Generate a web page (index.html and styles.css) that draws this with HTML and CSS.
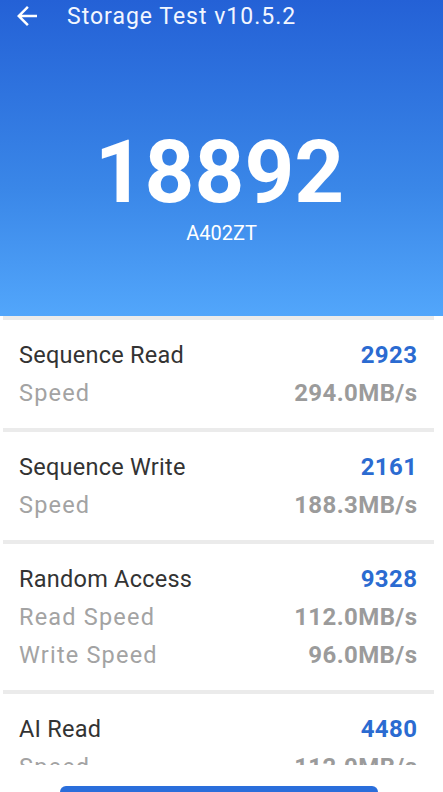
FILE: index.html
```html
<!DOCTYPE html>
<html lang="en">
  <head>
    <meta charset="UTF-8" />
    <meta name="viewport" content="width=device-width, initial-scale=1.0" />
    <title>Storage Test</title>
    <link rel="stylesheet" href="styles.css">
  </head>
  <body>
    <header class="hero">
      <div class="toolbar">
        <svg class="back" viewBox="0 0 24 24" width="30" height="30">
          <path d="M20 11H7.83l5.59-5.59L12 4l-8 8 8 8 1.41-1.41L7.83 13H20v-2z" fill="#fff" />
        </svg>
        <span class="toolbar-title">Storage Test v10.5.2</span>
      </div>
      <div class="score">18892</div>
      <div class="device">A402ZT</div>
    </header>

    <div class="results">
      <div class="card">
        <div class="row">
          <span class="name">Sequence Read</span>
          <span class="points">2923</span>
        </div>
        <div class="row">
          <span class="label">Speed</span>
          <span class="value">294.0MB/s</span>
        </div>
      </div>
      <div class="card">
        <div class="row">
          <span class="name">Sequence Write</span>
          <span class="points">2161</span>
        </div>
        <div class="row">
          <span class="label">Speed</span>
          <span class="value">188.3MB/s</span>
        </div>
      </div>
      <div class="card">
        <div class="row">
          <span class="name">Random Access</span>
          <span class="points">9328</span>
        </div>
        <div class="row">
          <span class="label">Read Speed</span>
          <span class="value">112.0MB/s</span>
        </div>
        <div class="row">
          <span class="label">Write Speed</span>
          <span class="value">96.0MB/s</span>
        </div>
      </div>
      <div class="card">
        <div class="row">
          <span class="name">AI Read</span>
          <span class="points">4480</span>
        </div>
        <div class="row">
          <span class="label">Speed</span>
          <span class="value">112.0MB/s</span>
        </div>
      </div>
    </div>

    <div class="footer">
      <button class="retest" aria-label="Test again"></button>
    </div>
  </body>
</html>
```

FILE: styles.css
```css
html,
body {
  margin: 0;
  padding: 0;
  height: 792px;
  overflow: hidden;
}

body {
  font-family: Roboto, "Noto Sans", sans-serif;
  background-color: #fff;
}

.hero {
  height: 316px;
  background: linear-gradient(180deg, #2461d6 0%, #3a87e8 60%, #52a6fb 100%);
  color: #fff;
  text-align: center;
}

.toolbar {
  display: flex;
  align-items: center;
  height: 32px;
  padding-left: 12px;
}

.back {
  flex: none;
}

.toolbar-title {
  margin-left: 25px;
  font-size: 23px;
  letter-spacing: 1px;
  color: #f2f6ff;
}

.score {
  margin-top: 89px;
  font-size: 87px;
  font-weight: 700;
  line-height: 102px;
  padding-right: 4px;
}

.device {
  margin-top: -2px;
  font-size: 20px;
  line-height: 24px;
}

.results {
  height: 449px;
  overflow: hidden;
  margin: 0 9px 0 3px;
}

.card {
  border-top: 4px solid #ebebeb;
  padding: 16px 17px 16px 16px;
}

.row {
  display: flex;
  justify-content: space-between;
  align-items: baseline;
  line-height: 38px;
}

.name {
  font-size: 23.5px;
  color: #333;
  letter-spacing: 0.25px;
}

.label {
  font-size: 23.5px;
  color: #a3a3a3;
  letter-spacing: 1.2px;
}

.points,
.value {
  font-size: 24px;
  font-weight: 700;
  letter-spacing: 0.4px;
  margin-right: -0.4px;
}

.points {
  color: #2b6bd1;
}

.value {
  color: #9b9b9b;
}

.footer {
  padding-top: 21px;
  display: flex;
  justify-content: center;
  padding-right: 6px;
}

.retest {
  width: 318px;
  height: 48px;
  border: none;
  border-radius: 6px;
  background-color: #2a6edb;
}
```
